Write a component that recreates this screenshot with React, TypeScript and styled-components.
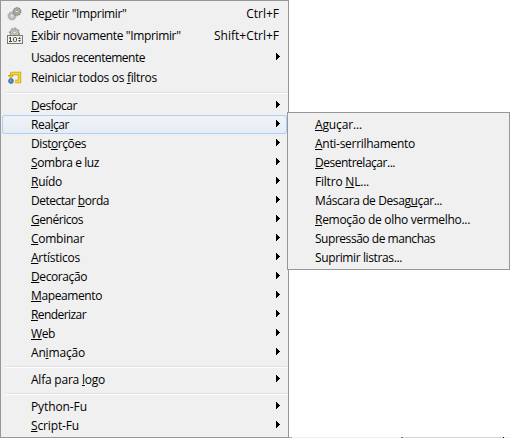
import React from 'react';
import styled, { createGlobalStyle } from 'styled-components';

const GlobalStyle = createGlobalStyle`
  body { margin: 0; background: #fff; overflow: hidden; }
`;

const Desktop = styled.div`
  position: relative;
  display: flex;
  width: 510px;
  height: 438px;
  background: #fff;
  color: #000;
  font: 12px/19px "Open Sans", "Noto Sans", sans-serif;
`;

const Menu = styled.div`
  box-sizing: border-box;
  display: flex;
  flex-direction: column;
  width: 289px;
  height: 438px;
  padding: 2px 1px;
  border: 1px solid #979797;
  background: #f0f0f0;
`;

const Submenu = styled(Menu)`
  position: absolute;
  left: 287px;
  top: 112px;
  width: 223px;
  height: 158px;
`;

const Row = styled.div<{ $lead?: number; $active?: boolean }>`
  box-sizing: border-box;
  display: flex;
  flex: none;
  height: 19px;
  margin-top: ${(p) => p.$lead ?? 0}px;
  border-radius: 3px;
  ${(p) =>
    p.$active &&
    `background: linear-gradient(#f1f3f6, #e6ecf5);
     box-shadow: inset 0 0 0 1px #aecff7;`}
`;

const IconCell = styled.span<{ $narrow?: boolean }>`
  flex: none;
  width: ${(p) => (p.$narrow ? 26 : 29)}px;
  height: 19px;
  svg { display: block; margin-left: 5px; }
`;

const Label = styled.span<{ $track: number }>`
  flex: 1;
  letter-spacing: ${(p) => p.$track}px;
  white-space: pre;
`;

const Mnemonic = styled.span`
  text-decoration: underline;
  text-decoration-thickness: 1px;
  text-decoration-skip-ink: none;
  text-underline-offset: 1px;
`;

const Shortcut = styled.span`
  margin-right: 8px;
  white-space: pre;
`;

const Arrow = styled.svg`
  width: 4px;
  height: 7px;
  margin: 5px 7px 0 0;
`;

const Divider = styled.div<{ $lead?: number }>`
  flex: none;
  height: 1px;
  margin: ${(p) => p.$lead ?? 4}px 0 2px 4px;
  background: #e0e0e0;
  border-bottom: 1px solid #fff;
`;

const Backdrop = styled.div`
  display: flex;
  flex: 1;
  align-items: flex-end;
`;

const Edge = styled.span<{ $w: number; $color: string }>`
  width: ${(p) => p.$w}px;
  height: 1px;
  background: ${(p) => p.$color};
`;

const GearsIcon = () => (
  <svg width="16" height="18" viewBox="0 0 16 18" fill="none">
    <circle cx="5" cy="11.9" r="2.9" stroke="#b4b4b0" strokeWidth="2" />
    <circle cx="5" cy="11.9" r="4" stroke="#a0a09c" strokeWidth="1" strokeDasharray="1.5 1" />
    <circle cx="5" cy="11.9" r="1.6" fill="#e4e4df" stroke="#c4c4be" />
    <circle cx="10" cy="7.6" r="3" stroke="#a0a09c" strokeWidth="2" />
    <circle cx="10" cy="7.6" r="4" stroke="#80807c" strokeWidth="1" strokeDasharray="1.5 1" />
    <circle cx="10" cy="7.6" r="1.4" fill="#efefeb" stroke="#858581" />
  </svg>
);

const CounterIcon = () => (
  <svg width="16" height="18" viewBox="0 0 16 18" fill="none">
    <circle cx="7.5" cy="7" r="4.2" fill="#c6c6c2" stroke="#91918c" />
    <circle cx="7.5" cy="7" r="5" stroke="#8b8b87" strokeDasharray="2 1.8" />
    <circle cx="7.5" cy="6.5" r="1.7" fill="#eee" stroke="#999994" />
    <rect x=".5" y="9.5" width="15" height="8" fill="#f0f0ed" stroke="#777773" />
    <path d="M2 12h1.5M3.5 11v5M2 15.5h3" stroke="#444641" />
    <rect x="6.5" y="11.5" width="3" height="4" rx="1" stroke="#444641" />
    <path d="M11 13 12.5 11 14 13zM11 14l1.5 2L14 14z" fill="#444641" />
  </svg>
);

const ResetIcon = () => (
  <svg width="16" height="18" viewBox="0 0 16 18" fill="none">
    <path d="M4.5 5.5h8v8H8" stroke="#c9a510" strokeWidth="3.4" />
    <path d="M4.5 5.5h8v8H8" stroke="#f2d83c" strokeWidth="1.8" />
    <path d="M3.5 4v4M1 7.5h5.5L3.8 10z" stroke="#d3ad10" fill="#f1d532" />
    <circle cx="4" cy="13" r="2.4" fill="#5b87bd" stroke="#315e96" strokeWidth=".8" />
    <circle cx="3.4" cy="12.3" r=".8" fill="#8daed5" />
  </svg>
);

interface Item {
  text: string;
  track: number;
  lead?: number;
  icon?: React.ReactNode;
  shortcut?: string;
  arrow?: boolean;
  active?: boolean;
}

// An ampersand precedes the mnemonic letter of each label.
const commands: Item[] = [
  { text: 'Re&petir "Imprimir"', track: -0.36, lead: 1, icon: <GearsIcon />, shortcut: 'Ctrl+F' },
  { text: '&Exibir novamente "Imprimir"', track: -0.36, lead: 3, icon: <CounterIcon />, shortcut: 'Shift+Ctrl+F' },
  { text: 'Usados recentemente', track: -0.49, lead: 3, arrow: true },
  { text: 'Reiniciar todos os &filtros', track: -0.32, lead: 1, icon: <ResetIcon /> },
];

const filters: Item[] = [
  { text: '&Desfocar', track: -0.47 },
  { text: 'Rea&lçar', track: -0.45, active: true },
  { text: 'Dist&orções', track: -0.43 },
  { text: '&Sombra e luz', track: -0.4 },
  { text: '&Ruído', track: -0.27 },
  { text: 'Detectar &borda', track: -0.48 },
  { text: '&Genéricos', track: -0.46 },
  { text: '&Combinar', track: -0.27 },
  { text: '&Artísticos', track: -0.25 },
  { text: '&Decoração', track: -0.4 },
  { text: '&Mapeamento', track: -0.39 },
  { text: '&Renderizar', track: -0.57 },
  { text: '&Web', track: -0.39 },
  { text: 'An&imação', track: -0.17 },
];

const scripts: Item[] = [
  { text: 'Python-Fu', track: -0.1 },
  { text: '&Script-Fu', track: -0.14 },
];

const enhance: Item[] = [
  { text: '&Aguçar...', track: -0.14 },
  { text: '&Anti-serrilhamento', track: -0.29 },
  { text: '&Desentrelaçar...', track: -0.48 },
  { text: 'Filtro &NL...', track: -0.21 },
  { text: 'Máscara de Desag&uçar...', track: -0.39 },
  { text: '&Remoção de olho vermelho...', track: -0.29 },
  { text: 'Supressão de manchas', track: -0.46 },
  { text: 'Suprimir listras...', track: -0.38 },
];

function MenuItem({ item, narrow, arrow }: { item: Item; narrow?: boolean; arrow?: boolean }) {
  const [before, after] = item.text.split('&');
  return (
    <Row $lead={item.lead} $active={item.active}>
      <IconCell $narrow={narrow}>{item.icon}</IconCell>
      <Label $track={item.track}>
        {before}
        {after && <Mnemonic>{after[0]}</Mnemonic>}
        {after?.slice(1)}
      </Label>
      {item.shortcut && <Shortcut>{item.shortcut}</Shortcut>}
      {(arrow || item.arrow) && (
        <Arrow viewBox="0 0 4 7" shapeRendering="crispEdges">
          <path d="M0 0H1V1H2V2H3V3H4V4H3V5H2V6H1V7H0Z" />
        </Arrow>
      )}
    </Row>
  );
}

export default function App() {
  return (
    <>
      <GlobalStyle />
      <Desktop>
        <Menu>
          {commands.map((i) => <MenuItem key={i.text} item={i} />)}
          <Divider $lead={5} />
          {filters.map((i) => <MenuItem key={i.text} item={i} arrow />)}
          <Divider />
          <MenuItem item={{ text: 'Alfa para &logo', track: -0.22 }} arrow />
          <Divider />
          {scripts.map((i) => <MenuItem key={i.text} item={i} arrow />)}
        </Menu>
        <Backdrop>
          <Edge $w={3} $color="#aaa" />
          <Edge $w={109} $color="#eee" />
          <Edge $w={2} $color="#777" />
          <Edge $w={100} $color="#cbd6df" />
          <Edge $w={1} $color="#111" />
          <Edge $w={6} $color="#eee" />
        </Backdrop>
        <Submenu>
          {enhance.map((i) => <MenuItem key={i.text} item={i} narrow />)}
        </Submenu>
      </Desktop>
    </>
  );
}
